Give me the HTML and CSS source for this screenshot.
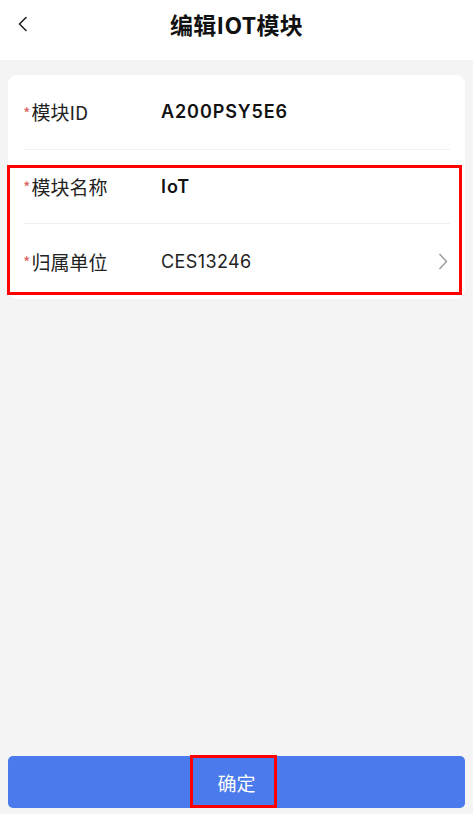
FILE: index.html
```html
<!DOCTYPE html>
<html lang="zh">
<head>
<meta charset="utf-8">
<title>编辑IOT模块</title>
<link rel="stylesheet" href="styles.css">
</head>
<body>
<div class="page">
  <header class="topbar">
    <span class="back">
      <svg width="12" height="16" viewBox="0 0 12 16"><path d="M9 1.5 L2.5 8 L9 14.5" fill="none" stroke="#222" stroke-width="1.6" stroke-linecap="round" stroke-linejoin="round"/></svg>
    </span>
    <h1 class="title">编辑IOT模块</h1>
  </header>
  <main class="content">
    <section class="card">
      <div class="row">
        <span class="label"><i class="req">*</i>模块ID</span>
        <span class="value strong">A200PSY5E6</span>
      </div>
      <div class="row">
        <span class="label"><i class="req">*</i>模块名称</span>
        <span class="value strong">IoT</span>
      </div>
      <div class="row last">
        <span class="label"><i class="req">*</i>归属单位</span>
        <span class="value">CES13246</span>
        <svg class="arrow" width="10" height="17" viewBox="0 0 10 17"><path d="M1.5 1 L8.5 8.5 L1.5 16" fill="none" stroke="#9a9a9a" stroke-width="1.4" stroke-linejoin="round"/></svg>
      </div>
    </section>
    <div class="spacer"></div>
    <button class="submit">确定</button>
  </main>
  <div class="mark mark-rows"></div>
  <div class="mark mark-btn"></div>
</div>
</body>
</html>
```
FILE: styles.css
```css
* { box-sizing: border-box; }
html, body { margin: 0; padding: 0; }
body {
  background: #f4f4f4;
  font-family: "Inter", "Noto Sans CJK SC", sans-serif;
  color: #111;
}
.page {
  position: relative;
  height: 814px;
  display: flex;
  flex-direction: column;
}
.topbar {
  height: 60px;
  background: #fff;
  display: flex;
  align-items: center;
  justify-content: center;
  position: relative;
  flex: none;
}
.back {
  position: absolute;
  left: 17px;
  top: 16px;
  display: flex;
}
.title {
  margin: 0 0 12px 0;
  font-size: 23px;
  font-weight: 700;
  font-family: "Noto Sans CJK SC", sans-serif;
  color: #111;
  letter-spacing: 0.3px;
}
.content {
  flex: 1;
  display: flex;
  flex-direction: column;
  padding: 15px 8px 6px;
}
.card {
  background: #fff;
  border-radius: 9px;
  padding: 0 15px;
}
.row {
  height: 74.5px;
  display: flex;
  align-items: center;
  border-bottom: 1px solid #f0f0f0;
}
.row.last { border-bottom: none; }
.label {
  width: 138px;
  font-size: 19px;
  font-family: "Noto Sans CJK SC", sans-serif;
  color: #222;
  display: flex;
  align-items: center;
}
.req {
  font-style: normal;
  color: #d9605a;
  font-size: 16px;
  margin-right: 1px;
  position: relative;
  top: 1px;
}
.value {
  flex: 1;
  font-size: 18px;
  color: #222;
  letter-spacing: 0.4px;
}
.value.strong { font-weight: 600; color: #111; letter-spacing: 0.9px; }
.arrow { margin-right: 2px; }
.spacer { flex: 1; }
.submit {
  height: 52px;
  border: none;
  border-radius: 5px;
  background: #4a7aeb;
  color: #fff;
  font-size: 19px;
  font-family: "Noto Sans CJK SC", sans-serif;
  width: 100%;
  padding: 0;
}
.mark {
  position: absolute;
  border: 3px solid #f00;
  pointer-events: none;
}
.mark-rows { left: 7px; top: 165px; width: 455px; height: 130px; }
.mark-btn { left: 190px; top: 755px; width: 87px; height: 53px; }
```
